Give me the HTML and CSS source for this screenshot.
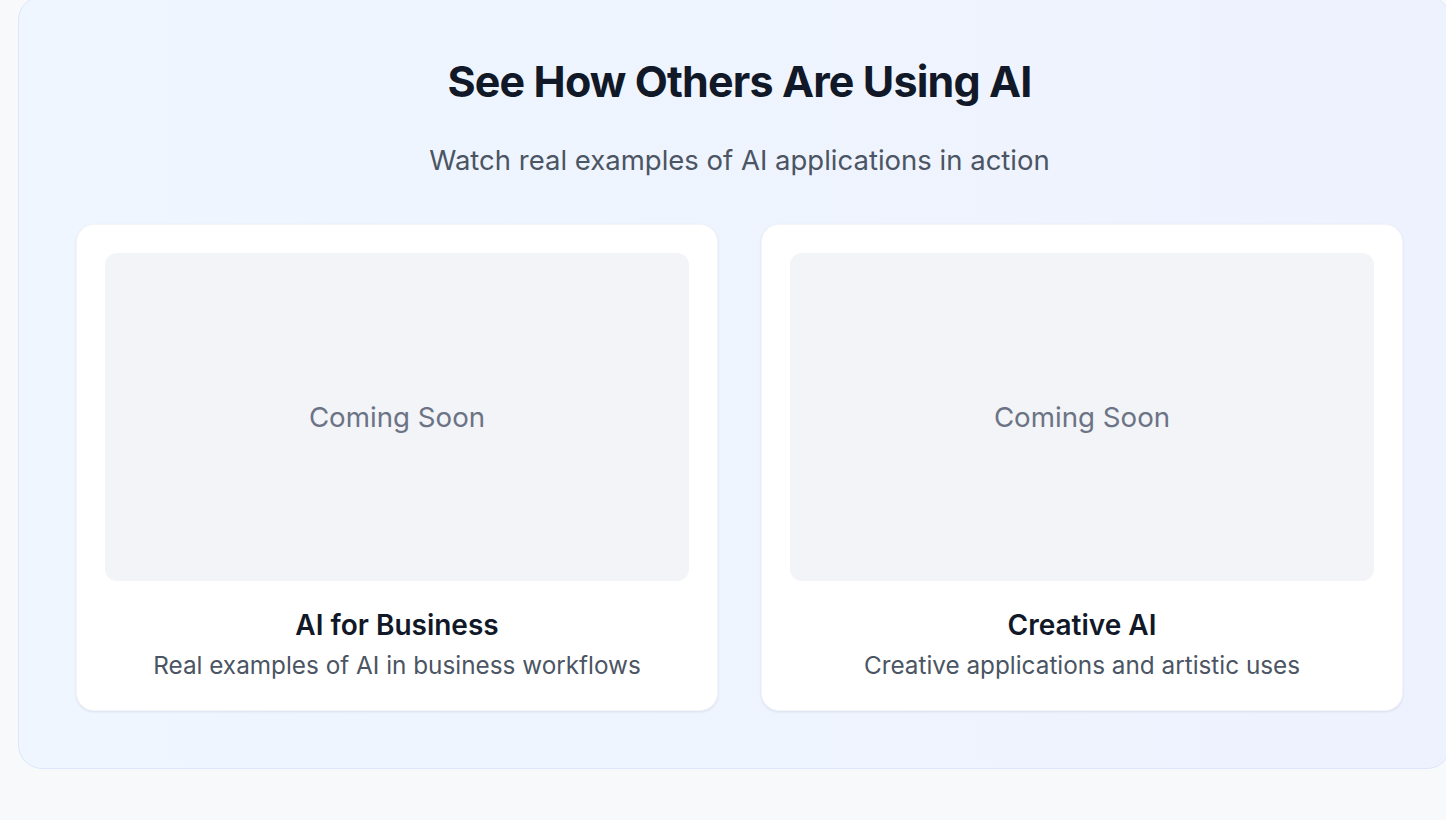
FILE: index.html
```html
<!DOCTYPE html>
<html lang="en">
<head>
<meta charset="utf-8">
<title>See How Others Are Using AI</title>
<link rel="stylesheet" href="styles.css">
</head>
<body>
<section class="showcase">
  <h2 class="showcase-title">See How Others Are Using AI</h2>
  <p class="showcase-sub">Watch real examples of AI applications in action</p>
  <div class="card-grid">
    <article class="card">
      <div class="placeholder">Coming Soon</div>
      <h3 class="card-title">AI for Business</h3>
      <p class="card-desc">Real examples of AI in business workflows</p>
    </article>
    <article class="card">
      <div class="placeholder">Coming Soon</div>
      <h3 class="card-title">Creative AI</h3>
      <p class="card-desc">Creative applications and artistic uses</p>
    </article>
  </div>
</section>
</body>
</html>
```
FILE: styles.css
```css
* { box-sizing: border-box; }
html, body { margin: 0; padding: 0; }
body {
  background: #f8f9fb;
  font-family: Inter, "Noto Sans", "Liberation Sans", sans-serif;
  height: 820px;
  overflow: hidden;
}
.showcase {
  margin: -4px 0 0 18px;
  width: 1433px;
  padding: 58px 47px 57px 57px;
  border: 1px solid #dce7fb;
  border-radius: 24px;
  background: linear-gradient(90deg, #eff6ff 0%, #eef2fe 100%);
}
.showcase-title {
  margin: 0;
  text-align: center;
  font-size: 43px;
  line-height: 52px;
  font-weight: 700;
  letter-spacing: -0.02em;
  color: #111827;
}
.showcase-sub {
  margin: 36px 0 0;
  text-align: center;
  font-size: 27.5px;
  line-height: 34px;
  color: #4b5563;
}
.card-grid {
  margin-top: 47px;
  display: grid;
  grid-template-columns: 1fr 1fr;
  gap: 43px;
}
.card {
  background: #fff;
  border: 1px solid #f3f5f9;
  border-radius: 18px;
  padding: 28px 28px 30px;
  box-shadow: 0 1px 3px rgba(30, 41, 80, 0.06), 0 1px 2px rgba(30, 41, 80, 0.04);
  text-align: center;
}
.placeholder {
  height: 328px;
  border-radius: 12px;
  background: #f2f4f8;
  display: flex;
  align-items: center;
  justify-content: center;
  font-size: 27.7px;
  color: #6b7385;
}
.card-title {
  margin: 26px 0 0;
  font-size: 28px;
  line-height: 36px;
  font-weight: 600;
  color: #111827;
}
.card-desc {
  margin: 7px 0 0;
  font-size: 24.3px;
  line-height: 30px;
  color: #4b5563;
}
```
